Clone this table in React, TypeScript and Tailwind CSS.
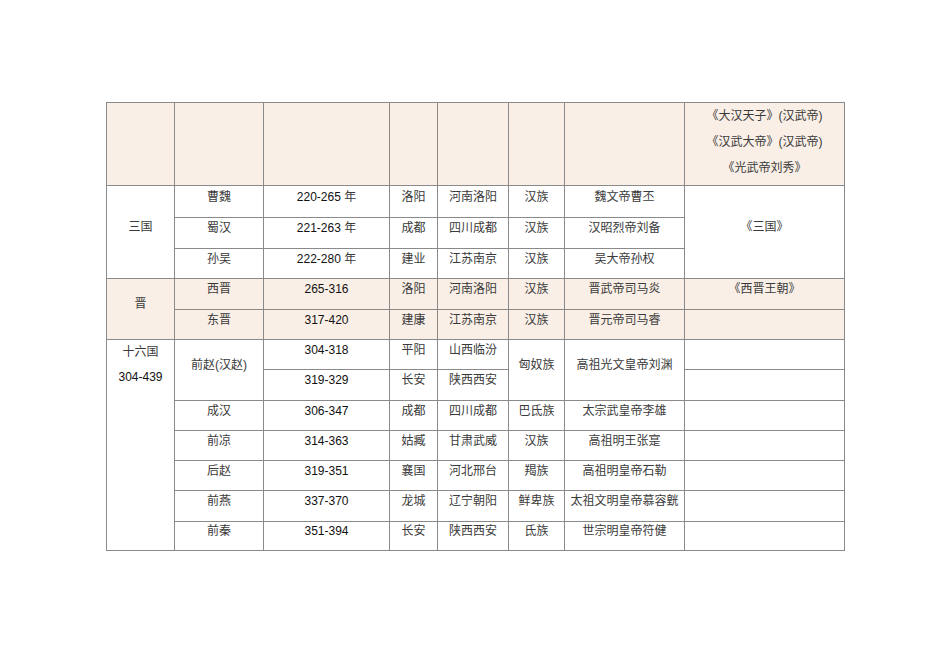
const cell = 'border border-[#8a8a8a] text-center align-middle px-1 pt-0 pb-[10px]';
const beige = 'bg-[#f9efe6]';

type Row = {
  name: string;
  years: string;
  nian?: boolean;
  capital: string;
  place: string;
  ethnic: string;
  founder: string;
};

const sanguo: Row[] = [
  { name: '曹魏', years: '220-265', nian: true, capital: '洛阳', place: '河南洛阳', ethnic: '汉族', founder: '魏文帝曹丕' },
  { name: '蜀汉', years: '221-263', nian: true, capital: '成都', place: '四川成都', ethnic: '汉族', founder: '汉昭烈帝刘备' },
  { name: '孙吴', years: '222-280', nian: true, capital: '建业', place: '江苏南京', ethnic: '汉族', founder: '吴大帝孙权' },
];

const later: Row[] = [
  { name: '成汉', years: '306-347', capital: '成都', place: '四川成都', ethnic: '巴氐族', founder: '太宗武皇帝李雄' },
  { name: '前凉', years: '314-363', capital: '姑臧', place: '甘肃武威', ethnic: '汉族', founder: '高祖明王张寔' },
  { name: '后赵', years: '319-351', capital: '襄国', place: '河北邢台', ethnic: '羯族', founder: '高祖明皇帝石勒' },
  { name: '前燕', years: '337-370', capital: '龙城', place: '辽宁朝阳', ethnic: '鲜卑族', founder: '太祖文明皇帝慕容皝' },
  { name: '前秦', years: '351-394', capital: '长安', place: '陕西西安', ethnic: '氐族', founder: '世宗明皇帝符健' },
];

function Years({ years, nian }: { years: string; nian?: boolean }) {
  return (
    <>
      <span className="text-[12px] text-[#111]">{years}</span>
      {nian && ' 年'}
    </>
  );
}

export default function App() {
  return (
    <div className="min-h-screen bg-white pt-[102px] pl-[106px]">
      <table className="table-fixed border-collapse w-[738px] text-[12px] leading-[16px] text-[#3a3a3a] font-['Liberation_Sans','Noto_Sans_CJK_SC',sans-serif]">
        <colgroup>
          <col className="w-[68px]" />
          <col className="w-[89px]" />
          <col className="w-[126px]" />
          <col className="w-[48px]" />
          <col className="w-[71px]" />
          <col className="w-[56px]" />
          <col className="w-[120px]" />
          <col className="w-[160px]" />
        </colgroup>
        <tbody>
          {/* header */}
          <tr className={`h-[82px] ${beige}`}>
            <td className={cell} />
            <td className={cell} />
            <td className={cell} />
            <td className={cell} />
            <td className={cell} />
            <td className={cell} />
            <td className={cell} />
            <td className="border border-[#8a8a8a] text-center align-middle px-1 pt-0 pb-[4px] leading-[26px]">
              <div>《大汉天子》(汉武帝)</div>
              <div>《汉武大帝》(汉武帝)</div>
              <div>《光武帝刘秀》</div>
            </td>
          </tr>

          {/* 三国 */}
          {sanguo.map((r, i) => (
            <tr key={r.name} className={i === 0 ? 'h-[32px]' : i === 1 ? 'h-[31px]' : 'h-[30px]'}>
              {i === 0 && (
                <td rowSpan={3} className={cell}>
                  三国
                </td>
              )}
              <td className={cell}>{r.name}</td>
              <td className={cell}>
                <Years years={r.years} nian={r.nian} />
              </td>
              <td className={cell}>{r.capital}</td>
              <td className={cell}>{r.place}</td>
              <td className={cell}>{r.ethnic}</td>
              <td className={cell}>{r.founder}</td>
              {i === 0 && (
                <td rowSpan={3} className={cell}>
                  《三国》
                </td>
              )}
            </tr>
          ))}

          {/* 晋 */}
          <tr className={`h-[31px] ${beige}`}>
            <td rowSpan={2} className={cell}>
              晋
            </td>
            <td className={cell}>西晋</td>
            <td className={cell}>
              <Years years="265-316" />
            </td>
            <td className={cell}>洛阳</td>
            <td className={cell}>河南洛阳</td>
            <td className={cell}>汉族</td>
            <td className={cell}>晋武帝司马炎</td>
            <td className={cell}>《西晋王朝》</td>
          </tr>
          <tr className={`h-[30px] ${beige}`}>
            <td className={cell}>东晋</td>
            <td className={cell}>
              <Years years="317-420" />
            </td>
            <td className={cell}>建康</td>
            <td className={cell}>江苏南京</td>
            <td className={cell}>汉族</td>
            <td className={cell}>晋元帝司马睿</td>
            <td className={cell} />
          </tr>

          {/* 十六国 */}
          <tr className="h-[30px]">
            <td rowSpan={7} className="border border-[#8a8a8a] text-center align-top px-1 pt-0 leading-[25px]">
              <div>十六国</div>
              <div>
                <span className="text-[12px] text-[#111]">304-439</span>
              </div>
            </td>
            <td rowSpan={2} className={cell}>
              前赵(汉赵)
            </td>
            <td className={cell}>
              <Years years="304-318" />
            </td>
            <td className={cell}>平阳</td>
            <td className={cell}>山西临汾</td>
            <td rowSpan={2} className={cell}>
              匈奴族
            </td>
            <td rowSpan={2} className={cell}>
              高祖光文皇帝刘渊
            </td>
            <td className={cell} />
          </tr>
          <tr className="h-[31px]">
            <td className={cell}>
              <Years years="319-329" />
            </td>
            <td className={cell}>长安</td>
            <td className={cell}>陕西西安</td>
            <td className={cell} />
          </tr>
          {later.map((r, i) => (
            <tr key={r.name} className={i === 3 ? 'h-[31px]' : i === 4 ? 'h-[29px]' : 'h-[30px]'}>
              <td className={cell}>{r.name}</td>
              <td className={cell}>
                <Years years={r.years} />
              </td>
              <td className={cell}>{r.capital}</td>
              <td className={cell}>{r.place}</td>
              <td className={cell}>{r.ethnic}</td>
              <td className={`${cell} whitespace-nowrap`}>{r.founder}</td>
              <td className={cell} />
            </tr>
          ))}
        </tbody>
      </table>
    </div>
  );
}
